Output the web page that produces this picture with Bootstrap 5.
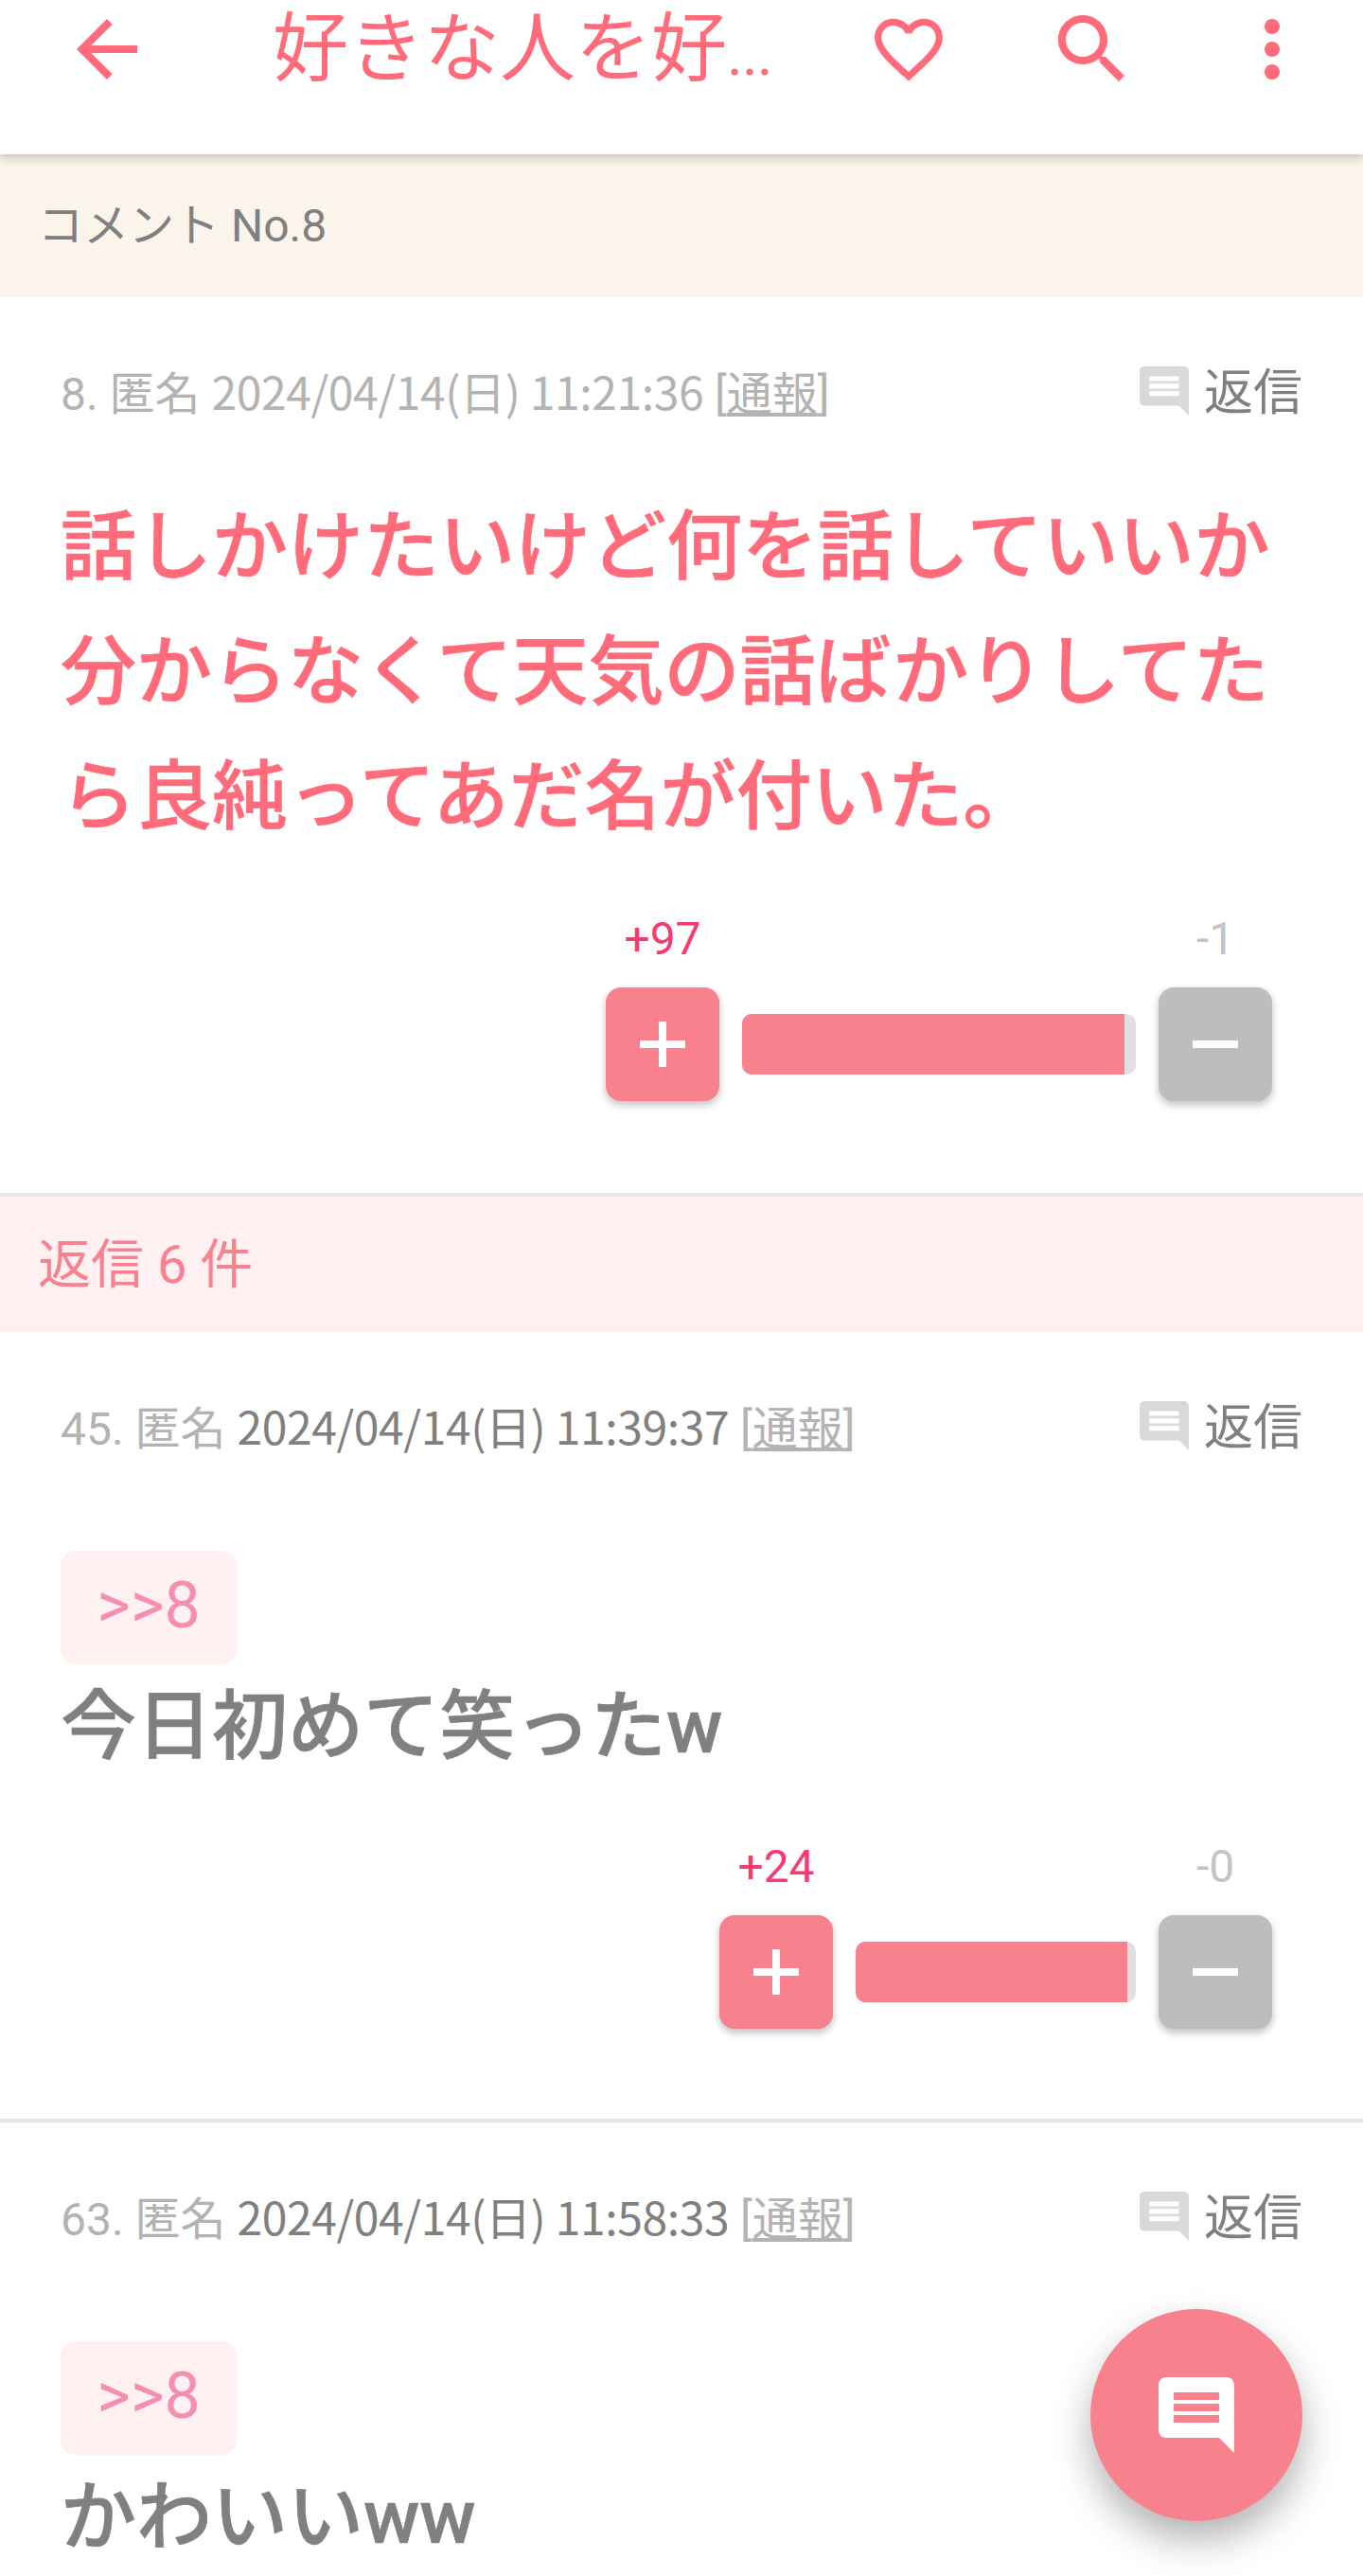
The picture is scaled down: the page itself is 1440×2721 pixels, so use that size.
<!DOCTYPE html>
<html lang="ja">
<head>
    <meta charset="UTF-8">
    <meta name="viewport" content="width=device-width, initial-scale=1.0">
    <title>コメント No.8</title>
    <link href="https://cdn.jsdelivr.net/npm/bootstrap@5.3.0/dist/css/bootstrap.min.css" rel="stylesheet">
    <style>
        html, body {
            height: 100%;
            overflow: hidden;
        }
        body {
            font-family: Roboto, "Noto Sans CJK JP", sans-serif;
            font-size: 48px;
            color: #808080;
            background: #fff;
        }
        svg { display: block; fill: currentColor; }
        .app-head {
            height: 163px;
            padding: 4px 0 0 65px;
            background: #fff;
            color: #ff6b7a;
            position: relative;
            z-index: 2;
            box-shadow: 0 3px 10px rgba(90, 80, 60, .35);
        }
        .app-head svg { width: 96px; height: 96px; }
        .app-head svg.head-heart { width: 86px; height: 86px; margin: 5px 0 0 37px; }
        .app-title {
            width: 592px;
            margin-left: 127px;
            font-size: 80px;
            line-height: 96px;
            white-space: nowrap;
        }
        .title-dots { font-size: 64px; letter-spacing: -1px; }
        .head-search { margin-left: 103px; }
        .head-more { margin-left: 94px; }
        .sect-comment { height: 151px; padding-left: 40px; background: #fbf4eb; }
        .sect-reply { height: 143px; padding-left: 40px; font-size: 56px; background: #fff0f1; color: #fa8290; }
        .res {
            padding: 73px 64px 97px;
            border-bottom: 4px solid #e5e5e5;
        }
        .res.has-anchor { padding-bottom: 95px; }
        .res-meta { height: 52px; line-height: 50px; color: #b3b3b3; white-space: nowrap; }
        .res-meta a { color: #b3b3b3; }
        .meta-date { font-family: "Noto Sans CJK JP", sans-serif; letter-spacing: -.4px; }
        .date-dark { color: #808080; }
        .res-reply { color: #808080; font-size: 52px; }
        .res-reply span { padding-top: 6px; }
        .res-reply svg { width: 52px; height: 52px; color: #d9d9d9; margin-right: 16px; transform: scaleX(-1); }
        .res-body {
            margin-top: 73px;
            font-size: 80px;
            line-height: 132px;
            font-weight: 500;
            -webkit-text-stroke: .6px currentColor;
        }
        .res-body.hot { color: #ff6b7a; }
        .res-anchor {
            display: inline-block;
            margin-top: 106px;
            width: 186px;
            height: 120px;
            line-height: 116px;
            text-align: center;
            font-size: 68px;
            border-radius: 16px;
            background: #fff0f1;
            color: #f48fb1;
        }
        .res-anchor + .res-body { margin-top: 0; }
        .vote { margin-top: 55px; padding-right: 32px; gap: 24px; }
        .has-anchor .vote { margin-top: 53px; }
        .vote-col { width: 120px; }
        .vote-num { height: 56px; line-height: 58px; margin-bottom: 24px; text-align: center; }
        .vote-num.up { color: #f43b72; }
        .vote-num.down { color: #c4c4c4; }
        .vote-btn {
            width: 120px;
            height: 120px;
            padding: 0;
            border: 0;
            border-radius: 16px;
            color: #fff;
            box-shadow: 0 4px 8px rgba(0, 0, 0, .25);
        }
        .vote-btn svg { width: 48px; height: 48px; }
        .vote-btn.up { background: #f7818d; }
        .vote-btn.down { background: #bdbdbd; }
        .vote-bar {
            height: 64px;
            margin-bottom: 28px;
            border-radius: 10px;
            background: #e0e0e0;
        }
        .vote-bar .progress-bar { background: #f7818d; }
        .fab {
            position: fixed;
            left: 1152px;
            top: 2439px;
            width: 224px;
            height: 224px;
            padding: 0;
            border: 0;
            border-radius: 50%;
            background: #f7818d;
            color: #fff;
            box-shadow: 0 20px 40px rgba(0, 0, 0, .3);
        }
        .fab svg { width: 80px; height: 80px; transform: scaleX(-1); }
    </style>
</head>
<body>
    <svg width="0" height="0" class="position-absolute">
        <symbol id="ic-msg" viewBox="2 2 20 20"><path d="M20 2H4c-1.1 0-1.99.9-1.99 2L2 22l4-4h14c1.1 0 2-.9 2-2V4c0-1.1-.9-2-2-2zm-2 12H6v-2h12v2zm0-3H6V9h12v2zm0-3H6V6h12v2z"/></symbol>
        <symbol id="ic-plus" viewBox="0 0 48 48"><path d="M20 0h8v20h20v8H28v20h-8V28H0v-8h20z"/></symbol>
        <symbol id="ic-minus" viewBox="0 0 48 48"><path d="M0 20h48v8H0z"/></symbol>
    </svg>

    <header class="app-head d-flex align-items-start">
        <svg viewBox="0 0 24 24"><path d="M20 11H7.83l5.59-5.59L12 4l-8 8 8 8 1.41-1.41L7.83 13H20v-2z"/></svg>
        <div class="app-title">好きな人を好<span class="title-dots">...</span></div>
        <svg class="head-heart" viewBox="0 0 24 24"><path d="M16.5 3c-1.74 0-3.41.81-4.5 2.09C10.91 3.81 9.24 3 7.5 3 4.42 3 2 5.42 2 8.5c0 3.78 3.4 6.86 8.55 11.54L12 21.35l1.45-1.32C18.6 15.36 22 12.28 22 8.5 22 5.42 19.58 3 16.5 3zm-4.4 15.55l-.1.1-.1-.1C7.14 14.24 4 11.39 4 8.5 4 6.5 5.5 5 7.5 5c1.54 0 3.04.99 3.57 2.36h1.87C13.46 5.99 14.96 5 16.5 5c2 0 3.5 1.5 3.5 3.5 0 2.89-3.14 5.74-7.9 10.05z"/></svg>
        <svg class="head-search" viewBox="0 0 24 24"><path d="M15.5 14h-.79l-.28-.27C15.41 12.59 16 11.11 16 9.5 16 5.91 13.09 3 9.5 3S3 5.91 3 9.5 5.91 16 9.5 16c1.61 0 3.09-.59 4.23-1.57l.27.28v.79l5 4.99L20.49 19l-4.99-5zm-6 0C7.01 14 5 11.99 5 9.5S7.01 5 9.5 5 14 7.01 14 9.5 11.99 14 9.5 14z"/></svg>
        <svg class="head-more" viewBox="0 0 24 24"><path d="M12 8c1.1 0 2-.9 2-2s-.9-2-2-2-2 .9-2 2 .9 2 2 2zm0 2c-1.1 0-2 .9-2 2s.9 2 2 2 2-.9 2-2-.9-2-2-2zm0 6c-1.1 0-2 .9-2 2s.9 2 2 2 2-.9 2-2-.9-2-2-2z"/></svg>
    </header>

    <div class="sect-comment d-flex align-items-center">コメント No.8</div>

    <article class="res">
        <div class="res-meta d-flex justify-content-between">
            <div>8. 匿名 <span class="meta-date">2024/04/14(日) 11:21:36</span> [<a href="#">通報</a>]</div>
            <div class="res-reply d-flex align-items-center"><svg><use href="#ic-msg"/></svg><span>返信</span></div>
        </div>
        <div class="res-body hot">話しかけたいけど何を話していいか分からなくて天気の話ばかりしてたら良純ってあだ名が付いた。</div>
        <div class="vote d-flex justify-content-end align-items-end">
            <div class="vote-col">
                <div class="vote-num up">+97</div>
                <button class="btn vote-btn up d-flex align-items-center justify-content-center"><svg><use href="#ic-plus"/></svg></button>
            </div>
            <div class="progress vote-bar" style="width:416px"><div class="progress-bar" style="width:97%"></div></div>
            <div class="vote-col">
                <div class="vote-num down">-1</div>
                <button class="btn vote-btn down d-flex align-items-center justify-content-center"><svg><use href="#ic-minus"/></svg></button>
            </div>
        </div>
    </article>

    <div class="sect-reply d-flex align-items-center">返信 6 件</div>

    <article class="res has-anchor">
        <div class="res-meta d-flex justify-content-between">
            <div>45. 匿名 <span class="meta-date date-dark">2024/04/14(日) 11:39:37</span> [<a href="#">通報</a>]</div>
            <div class="res-reply d-flex align-items-center"><svg><use href="#ic-msg"/></svg><span>返信</span></div>
        </div>
        <div class="res-anchor">&gt;&gt;8</div>
        <div class="res-body">今日初めて笑ったw</div>
        <div class="vote d-flex justify-content-end align-items-end">
            <div class="vote-col">
                <div class="vote-num up">+24</div>
                <button class="btn vote-btn up d-flex align-items-center justify-content-center"><svg><use href="#ic-plus"/></svg></button>
            </div>
            <div class="progress vote-bar" style="width:296px"><div class="progress-bar" style="width:97%"></div></div>
            <div class="vote-col">
                <div class="vote-num down">-0</div>
                <button class="btn vote-btn down d-flex align-items-center justify-content-center"><svg><use href="#ic-minus"/></svg></button>
            </div>
        </div>
    </article>

    <article class="res has-anchor">
        <div class="res-meta d-flex justify-content-between">
            <div>63. 匿名 <span class="meta-date date-dark">2024/04/14(日) 11:58:33</span> [<a href="#">通報</a>]</div>
            <div class="res-reply d-flex align-items-center"><svg><use href="#ic-msg"/></svg><span>返信</span></div>
        </div>
        <div class="res-anchor">&gt;&gt;8</div>
        <div class="res-body">かわいいww</div>
    </article>

    <button class="btn fab d-flex align-items-center justify-content-center"><svg><use href="#ic-msg"/></svg></button>

    <script src="https://cdn.jsdelivr.net/npm/bootstrap@5.3.0/dist/js/bootstrap.bundle.min.js"></script>
</body>
</html>
